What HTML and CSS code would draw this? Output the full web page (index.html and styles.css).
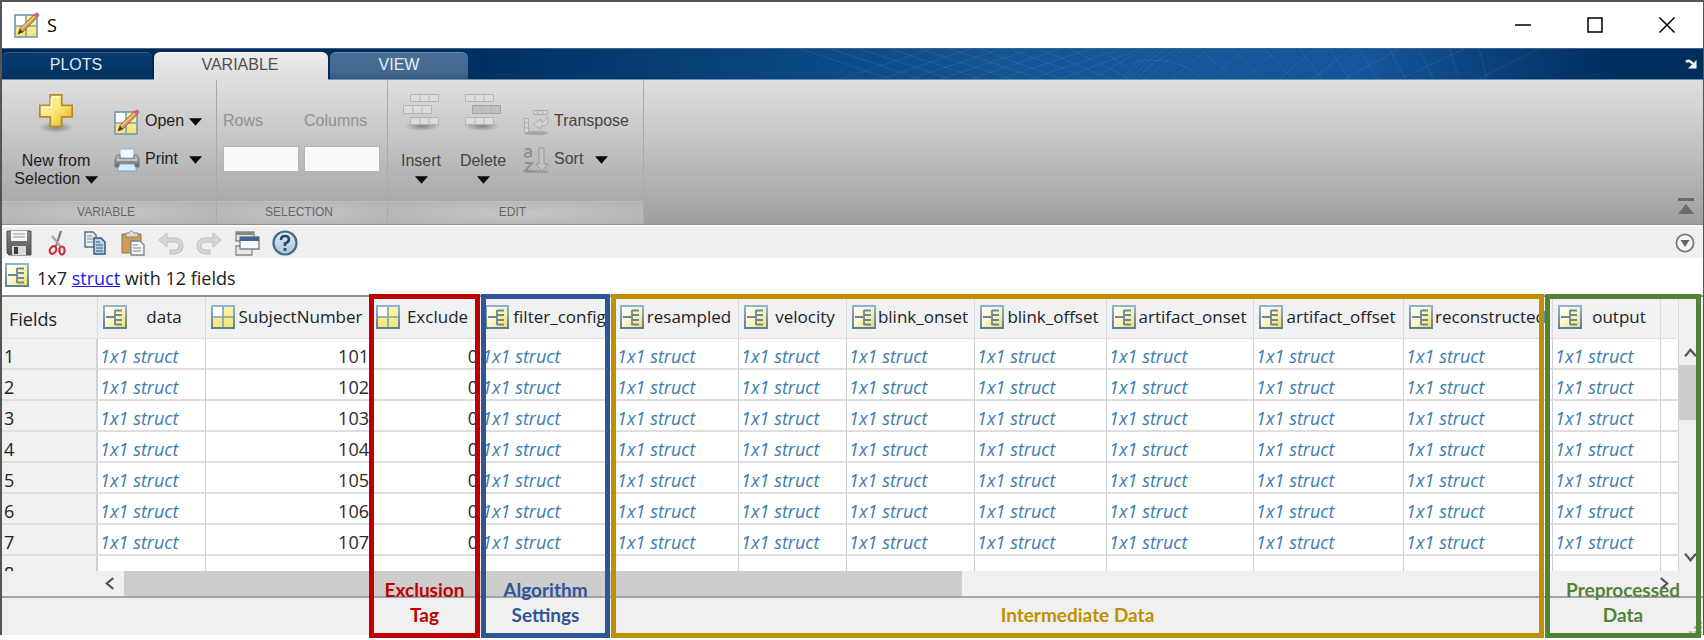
FILE: index.html
```html
<!DOCTYPE html>
<html lang="en">
<head>
<meta charset="utf-8">
<title>S</title>
<link rel="stylesheet" href="styles.css">
</head>
<body>
<svg class="defs" aria-hidden="true">
  <defs>
    <linearGradient id="gYellow" x1="0" y1="0" x2="1" y2="1"><stop offset="0" stop-color="#ffffff"/><stop offset=".45" stop-color="#fdf8cf"/><stop offset="1" stop-color="#f0dc5a"/></linearGradient>
    <linearGradient id="gCell" x1="0" y1="0" x2="0" y2="1"><stop offset="0" stop-color="#fdf7ae"/><stop offset="1" stop-color="#f4e273"/></linearGradient>
    <linearGradient id="gPlus" x1="0" y1="0" x2="1" y2="1"><stop offset="0" stop-color="#fdf3b0"/><stop offset=".5" stop-color="#fbe878"/><stop offset="1" stop-color="#e3a617"/></linearGradient>
    <linearGradient id="gFrame" x1="0" y1="0" x2="0" y2="1"><stop offset="0" stop-color="#8db4d2"/><stop offset="1" stop-color="#5f7f92"/></linearGradient>
    <linearGradient id="gGrey" x1="0" y1="0" x2="0" y2="1"><stop offset="0" stop-color="#c9c9c9"/><stop offset="1" stop-color="#5c5f61"/></linearGradient>
    <linearGradient id="gHelp" x1="0" y1="0" x2="0" y2="1"><stop offset="0" stop-color="#dfeefa"/><stop offset="1" stop-color="#a3c4de"/></linearGradient>
    <radialGradient id="gShadow"><stop offset="0" stop-color="#555" stop-opacity=".6"/><stop offset="1" stop-color="#555" stop-opacity="0"/></radialGradient>
    <symbol id="struct" viewBox="0 0 24 24">
      <rect x="1" y="1" width="22" height="22" fill="url(#gYellow)" stroke="url(#gFrame)" stroke-width="2"/>
      <path d="M3 12h9M12 5v15M12 5.500h7M12 10h7M12 15h7M12 19.500h7" fill="none" stroke="#6d8794" stroke-width="1.800"/>
    </symbol>
    <symbol id="matrix" viewBox="0 0 24 24">
      <rect x="1" y="1" width="22" height="22" fill="url(#gCell)"/>
      <rect x="2" y="2" width="10" height="10" fill="#fff"/>
      <path d="M12 1v22M1 12h22" stroke="#7f9fb4" stroke-width="1.600"/>
      <rect x="1" y="1" width="22" height="22" fill="none" stroke="url(#gFrame)" stroke-width="2"/>
    </symbol>
    <symbol id="edit" viewBox="0 0 26 26">
      <rect x="1" y="3" width="22" height="22" fill="url(#gCell)"/>
      <rect x="2" y="4" width="10" height="10" fill="#fff"/>
      <path d="M12 3v22M1 14h22" stroke="#79a3c0" stroke-width="1.600"/>
      <rect x="1" y="3" width="22" height="22" fill="none" stroke="#7298b2" stroke-width="1.600"/>
      <path d="M4 22l2-5.500L20 2.500l3 3L9 20z" fill="#d99c53" stroke="#7d5226" stroke-width=".8"/>
      <path d="M7 17L21 4" stroke="#f2c98c" stroke-width="1.300"/>
      <path d="M4 22l2-5 3 3z" fill="#4a3728"/>
      <path d="M19.500 3l2-2c2-1 4.500 1 3.500 3l-2 2z" fill="#dc5f80"/>
    </symbol>
    <symbol id="down" viewBox="0 0 14 8"><path d="M0 0h14L7 8z" fill="#0a0a0a"/></symbol>
  </defs>
</svg>

<div class="window">
  <header class="titlebar">
    <svg class="app-icon"><use href="#edit"/></svg>
    <h1>S</h1>
    <div class="window-buttons">
      <button aria-label="Minimize"><svg viewBox="0 0 18 18"><path d="M1 9h16"/></svg></button>
      <button aria-label="Maximize"><svg viewBox="0 0 18 18"><path d="M2 2h14v14H2z"/></svg></button>
      <button aria-label="Close"><svg viewBox="0 0 18 18"><path d="M1.500 1.500l15 15M16.500 1.500l-15 15"/></svg></button>
    </div>
  </header>

  <nav class="tabs">
    <svg class="banner" viewBox="0 0 904 30" preserveAspectRatio="none" aria-hidden="true">
      <g fill="none" stroke="#9cc4e8" stroke-opacity=".13">
        <path d="M0 0l90 30M30 0l90 30M60 0l90 30M90 0l90 30M120 0l90 30M150 0l90 30M180 0l80 30M210 0l80 30M240 0l70 30M270 0l60 30M300 0l30 20"/>
        <path d="M40 30L130 0M80 30L170 0M110 30L200 0M140 30L230 0M170 30L260 0M200 30L290 0M230 30L320 0M260 30L340 0M290 30L345 0"/>
        <path d="M322 30Q335 12 350 0M326 30Q340 12 358 0M331 30Q345 12 366 0M337 30Q352 12 378 0M345 30Q365 12 385 0"/>
        <path d="M330 14Q375 4 402 30M400 0l35 30M432 0l30 30M465 0l28 30M500 0l22 30M530 0l20 30M560 0l18 30M590 0l16 30M620 0l14 30M650 0l10 30M680 0l8 30"/>
        <path d="M372 30L408 0M410 30L445 0M445 30L478 0M480 30L515 0M512 30L552 0M545 30L600 0M600 30L665 0M680 30L740 0"/>
      </g>
    </svg>
    <button class="tab">PLOTS</button>
    <button class="tab active">VARIABLE</button>
    <button class="tab light">VIEW</button>
    <button class="undock" aria-label="Dock"><svg viewBox="0 0 12 10"><path d="M1 3Q4 0 8 5" fill="none" stroke="#fff" stroke-width="2.500"/><path d="M11.500 1v8.500H3z" fill="#fff"/></svg></button>
  </nav>

  <section class="toolstrip">
    <div class="group variable">
      <div class="group-body">
        <button class="big">
          <svg class="plus" viewBox="0 0 38 42"><ellipse cx="19" cy="36" rx="18" ry="6" fill="url(#gShadow)"/><path d="M13 2h12v11h11v12H25v10H13V25H2V13h11z" fill="url(#gPlus)" stroke="#b58a2a" stroke-width="1.800"/><path d="M15 4h8M4 15h10V5" fill="none" stroke="#fffbe0" stroke-width="1.500"/></svg>
          <span>New from<br>Selection <svg class="arrow"><use href="#down"/></svg></span>
        </button>
        <div class="stack">
          <button class="small"><svg class="ic"><use href="#edit"/></svg><span>Open</span><svg class="arrow"><use href="#down"/></svg></button>
          <button class="small"><svg class="ic" viewBox="0 0 26 26"><path d="M6 2h14v9H6z" fill="#f2f9fd" stroke="#92b7d0"/><path d="M3 8h3v4h14V8h3l2 4v8H1v-8z" fill="url(#gGrey)" stroke="#777"/><path d="M3 13h20" stroke="#eee"/><path d="M6 17h14l3 7H3z" fill="#d7ebf8" stroke="#7fa4bf"/></svg><span class="print">Print</span><svg class="arrow"><use href="#down"/></svg></button>
        </div>
      </div>
      <h2>VARIABLE</h2>
    </div>
    <div class="group selection">
      <div class="group-body">
        <label>Rows<input type="text"></label>
        <label>Columns<input type="text"></label>
      </div>
      <h2>SELECTION</h2>
    </div>
    <div class="group edit">
      <div class="group-body">
        <button class="op"><svg class="blocks" viewBox="0 0 38 38"><ellipse cx="20" cy="33" rx="18" ry="5" fill="url(#gShadow)"/><g fill="#dcdcdc" stroke="#b4b4b4"><path d="M8.500 1.500h28v7h-28zM1.500 12.500h28v8h-28zM8.500 24.500h28v7h-28z"/><path d="M18 2v6M27 2v6M11 13v7M20 13v7M18 25v6M27 25v6"/></g></svg><span>Insert</span><svg class="arrow"><use href="#down"/></svg></button>
        <button class="op"><svg class="blocks" viewBox="0 0 38 38"><ellipse cx="18" cy="33" rx="18" ry="5" fill="url(#gShadow)"/><g fill="#dcdcdc" stroke="#b4b4b4"><path d="M1.500 1.500h28v7h-28zM1.500 24.500h28v7h-28z"/><path d="M8.500 12.500h28v8h-28z" fill="#bfbfbf" stroke="#a2a2a2"/><path d="M11 2v6M20 2v6M18 13v7M27 13v7M11 25v6M20 25v6"/></g></svg><span>Delete</span><svg class="arrow"><use href="#down"/></svg></button>
        <div class="stack">
          <button class="small"><svg class="ic" viewBox="0 0 26 26"><ellipse cx="13" cy="24" rx="12" ry="2" fill="#777" opacity=".4"/><g fill="#d5d5d5" stroke="#adadad"><path d="M10.500 1.500h14v4h-14zM15 2v3M20 2v3M1.500 9.500h4v14h-4zM2 14h3M2 19h3"/><path d="M25 8v5q0 4-7 4v3l-8-5 8-5v3q5 0 5-5z"/></g></svg><span>Transpose</span></button>
          <button class="small"><svg class="ic" viewBox="0 0 26 26"><ellipse cx="14" cy="25" rx="12" ry="2" fill="#777" opacity=".4"/><path d="M2 3q5-3 6 1v6M8 6Q1 5 2 9q3 3 6-1M2 16h7l-7 8h7" fill="none" stroke="#929292" stroke-width="2"/><path d="M16 1h5v16h4l-6 7-6-7h3z" fill="#c4c4c4" stroke="#999"/></svg><span class="sort">Sort</span><svg class="arrow"><use href="#down"/></svg></button>
        </div>
      </div>
      <h2>EDIT</h2>
    </div>
    <button class="collapse" aria-label="Minimize toolstrip"><svg viewBox="0 0 18 18"><path d="M1 1h16v3H1zM9 7l8 10H1z" fill="#6b6b6b"/></svg></button>
  </section>

  <div class="quickbar">
    <button aria-label="Save"><svg viewBox="0 0 26 26"><path d="M1 1h24v24H3l-2-2z" fill="url(#gGrey)" stroke="#555"/><path d="M1 1h24v24H3l-2-2z" fill="#4a4d4f" opacity=".55"/><path d="M5 1h16v10H5z" fill="#f4f4f4"/><path d="M7 4h12M7 7h12" stroke="#999"/><path d="M6 16h14v9H6z" fill="#d8d8d8"/><path d="M8 17h4v7H8z" fill="#3c3c3c"/></svg></button>
    <button aria-label="Cut"><svg viewBox="0 0 26 26"><path d="M17 1l-5 15" stroke="#777" stroke-width="2.200"/><path d="M8 6l9 11" stroke="#aaa" stroke-width="2.200"/><ellipse cx="9" cy="20" rx="3" ry="4" fill="none" stroke="#cf3038" stroke-width="2.200" transform="rotate(30 9 20)"/><ellipse cx="18" cy="20.500" rx="2.600" ry="4" fill="none" stroke="#cf3038" stroke-width="2.200"/></svg></button>
    <button aria-label="Copy"><svg viewBox="0 0 26 26"><path d="M3 2h8l3 3v12H3z" fill="#e5edf3" stroke="#66747f" stroke-width="1.500"/><path d="M5 6h5M5 9h7M5 12h7" stroke="#7d8b96"/><path d="M12 8h7l4 4v12H12z" fill="#b9d3ea" stroke="#33597e" stroke-width="1.500"/><path d="M14 12h4M14 15h7M14 18h7M14 21h7" stroke="#33597e"/></svg></button>
    <button aria-label="Paste"><svg viewBox="0 0 26 26"><path d="M2 4h19v19H2z" fill="#cf9c58" stroke="#97713a"/><path d="M6 3h3q2-4 5 0h4v4H6z" fill="#ddd" stroke="#888"/><path d="M11 11h9l4 4v10H11z" fill="#f4f4f4" stroke="#7b868e" stroke-width="1.300"/><path d="M13 15h5M13 18h8M13 21h8" stroke="#808e99"/></svg></button>
    <button aria-label="Undo"><svg viewBox="0 0 26 26"><path d="M1 10l8-7v5h7q9 0 9 8 0 7-9 8h-4v-4h4q5 0 5-4t-5-4H9v5z" fill="#d6d6d6" stroke="#bdbdbd"/></svg></button>
    <button aria-label="Redo"><svg viewBox="0 0 26 26"><path d="M25 10l-8-7v5h-7q-9 0-9 8 0 7 9 8h4v-4h-4q-5 0-5-4t5-4h7v5z" fill="#d6d6d6" stroke="#bdbdbd"/></svg></button>
    <button aria-label="Switch window"><svg viewBox="0 0 26 26"><path d="M2 2h18v9H2zM2 16h16v9H2z" fill="#e8e8e8" stroke="#888" stroke-width="1.300"/><path d="M2 2h18v3H2z" fill="#888"/><path d="M6 7h19v12H6z" fill="#fafafa" stroke="#6b8299" stroke-width="1.300"/><path d="M6 7h19v4H6z" fill="#42668c"/></svg></button>
    <button aria-label="Help"><svg viewBox="0 0 26 26"><circle cx="13" cy="13" r="11.500" fill="url(#gHelp)" stroke="#4b6a81" stroke-width="2.200"/><path d="M9 10q0-4 4-4t4 3.500q0 2.500-4 4V16" fill="none" stroke="#2f4558" stroke-width="2.600"/><path d="M11.600 18h2.800v2.800h-2.800z" fill="#2f4558"/></svg></button>
    <button class="more" aria-label="More"><svg viewBox="0 0 20 20"><circle cx="10" cy="10" r="8.600" fill="#f4f4f4" stroke="#777" stroke-width="1.800"/><path d="M5.500 7h9L10 14z" fill="#666"/></svg></button>
  </div>

  <div class="summary"><svg class="ic24"><use href="#struct"/></svg><p>1x7 <a href="#sheet">struct</a> with 12 fields</p></div>

  <main class="workspace" id="sheet">
    <div class="view">
      <div class="table-clip">
        <table>
          <colgroup><col class="c-fields"><col class="c-data"><col class="c-subject"><col class="c-exclude"><col class="c-filter"><col class="c-resampled"><col class="c-velocity"><col class="c-bonset"><col class="c-boffset"><col class="c-aonset"><col class="c-aoffset"><col class="c-recon"><col class="c-output"><col></colgroup>
          <thead>
            <tr>
              <th class="corner">Fields</th>
              <th><div><svg><use href="#struct"/></svg><span>data</span></div></th>
              <th><div><svg><use href="#matrix"/></svg><span>SubjectNumber</span></div></th>
              <th><div><svg><use href="#matrix"/></svg><span>Exclude</span></div></th>
              <th><div><svg><use href="#struct"/></svg><span>filter_config</span></div></th>
              <th><div><svg><use href="#struct"/></svg><span>resampled</span></div></th>
              <th><div><svg><use href="#struct"/></svg><span>velocity</span></div></th>
              <th><div><svg><use href="#struct"/></svg><span>blink_onset</span></div></th>
              <th><div><svg><use href="#struct"/></svg><span>blink_offset</span></div></th>
              <th><div><svg><use href="#struct"/></svg><span>artifact_onset</span></div></th>
              <th><div><svg><use href="#struct"/></svg><span>artifact_offset</span></div></th>
              <th><div><svg><use href="#struct"/></svg><span>reconstructed</span></div></th>
              <th><div><svg><use href="#struct"/></svg><span>output</span></div></th>
              <th></th>
            </tr>
          </thead>
          <tbody>
            <tr><th>1</th><td>1x1 struct</td><td class="num">101</td><td class="num">0</td><td>1x1 struct</td><td>1x1 struct</td><td>1x1 struct</td><td>1x1 struct</td><td>1x1 struct</td><td>1x1 struct</td><td>1x1 struct</td><td>1x1 struct</td><td>1x1 struct</td><td></td></tr>
            <tr><th>2</th><td>1x1 struct</td><td class="num">102</td><td class="num">0</td><td>1x1 struct</td><td>1x1 struct</td><td>1x1 struct</td><td>1x1 struct</td><td>1x1 struct</td><td>1x1 struct</td><td>1x1 struct</td><td>1x1 struct</td><td>1x1 struct</td><td></td></tr>
            <tr><th>3</th><td>1x1 struct</td><td class="num">103</td><td class="num">0</td><td>1x1 struct</td><td>1x1 struct</td><td>1x1 struct</td><td>1x1 struct</td><td>1x1 struct</td><td>1x1 struct</td><td>1x1 struct</td><td>1x1 struct</td><td>1x1 struct</td><td></td></tr>
            <tr><th>4</th><td>1x1 struct</td><td class="num">104</td><td class="num">0</td><td>1x1 struct</td><td>1x1 struct</td><td>1x1 struct</td><td>1x1 struct</td><td>1x1 struct</td><td>1x1 struct</td><td>1x1 struct</td><td>1x1 struct</td><td>1x1 struct</td><td></td></tr>
            <tr><th>5</th><td>1x1 struct</td><td class="num">105</td><td class="num">0</td><td>1x1 struct</td><td>1x1 struct</td><td>1x1 struct</td><td>1x1 struct</td><td>1x1 struct</td><td>1x1 struct</td><td>1x1 struct</td><td>1x1 struct</td><td>1x1 struct</td><td></td></tr>
            <tr><th>6</th><td>1x1 struct</td><td class="num">106</td><td class="num">0</td><td>1x1 struct</td><td>1x1 struct</td><td>1x1 struct</td><td>1x1 struct</td><td>1x1 struct</td><td>1x1 struct</td><td>1x1 struct</td><td>1x1 struct</td><td>1x1 struct</td><td></td></tr>
            <tr><th>7</th><td>1x1 struct</td><td class="num">107</td><td class="num">0</td><td>1x1 struct</td><td>1x1 struct</td><td>1x1 struct</td><td>1x1 struct</td><td>1x1 struct</td><td>1x1 struct</td><td>1x1 struct</td><td>1x1 struct</td><td>1x1 struct</td><td></td></tr>
            <tr><th>8</th><td></td><td></td><td></td><td></td><td></td><td></td><td></td><td></td><td></td><td></td><td></td><td></td><td></td></tr>
          </tbody>
        </table>
      </div>
      <div class="vscroll">
        <button aria-label="Scroll up"><svg viewBox="0 0 12 10"><path d="M1 8l5-6 5 6"/></svg></button>
        <div class="vthumb"></div>
        <button class="end" aria-label="Scroll down"><svg viewBox="0 0 12 10"><path d="M1 2l5 6 5-6"/></svg></button>
      </div>
    </div>
    <div class="hscroll">
      <button aria-label="Scroll left"><svg viewBox="0 0 10 12"><path d="M8 1L2 6l6 5"/></svg></button>
      <div class="hthumb"></div>
      <button class="end" aria-label="Scroll right"><svg viewBox="0 0 10 12"><path d="M2 1l6 5-6 5"/></svg></button>
    </div>
    <footer class="status"><svg viewBox="0 0 15 15"><path d="M11 1h3v3h-3zM6 6h3v3H6zM11 6h3v3h-3zM1 11h3v3H1zM6 11h3v3H6zM11 11h3v3h-3z" fill="#bdb9b0"/></svg></footer>
    <div class="marks">
      <div class="mark red">Exclusion<br>Tag</div>
      <div class="mark blue">Algorithm<br>Settings</div>
      <div class="mark gold">Intermediate Data</div>
      <div class="mark green">Preprocessed<br>Data</div>
    </div>
  </main>
</div>
</body>
</html>
```

FILE: styles.css
```css
* { box-sizing: border-box; }
body { margin: 0; min-height: 100vh; background: #fff; font-family: "Open Sans", "Noto Sans", sans-serif; color: #222; }
button { border: 0; background: none; padding: 0; margin: 0; font: inherit; color: inherit; display: flex; align-items: center; }
svg { display: block; flex: none; }
.defs { position: absolute; width: 0; height: 0; }
.window { margin-bottom: 5px; border: solid #555; border-width: 2px 1px 0 2px; background: #f0f0f0; }

.titlebar { display: flex; align-items: center; height: 46px; padding: 0 12px; background: #fff; }
.app-icon { width: 26px; height: 26px; }
.titlebar h1 { margin: 0 0 0 7px; font-size: 18px; font-weight: 400; color: #000; }
.window-buttons { margin-left: auto; display: flex; gap: 54px; padding-right: 15px; }
.window-buttons svg { width: 18px; height: 18px; fill: none; stroke: #000; stroke-width: 1.500; }

.tabs { position: relative; display: flex; align-items: flex-end; gap: 2px; height: 32px; border-top: 1px solid #3d618a; border-bottom: 1px solid #6d8fb1; background: linear-gradient(90deg, #00264f 0, #003061 28%, #0c4984 48%, #155796 62%, #15569a 80%, #0a407a 88%, #002e5d 95%); font: 16px "Liberation Sans", Arial, sans-serif; }
.banner { position: absolute; right: 0; top: 0; width: 53%; height: 100%; }
.tab { justify-content: center; width: 150px; height: 27px; padding: 0 2px 2px 0; border-radius: 6px 6px 0 0; color: #dfe8f1; background: linear-gradient(#073b6e, #043260); border-top: 1px solid #35608c; }
.tab.active { width: 174px; height: 28px; margin-bottom: -1px; padding-bottom: 3px; color: #4f4f4f; background: linear-gradient(#ececec, #dedede); border-color: #fff; position: relative; }
.tab.light { width: 138px; padding-right: 0; color: #e8eef5; background: linear-gradient(#496f97, #456a90 70%, #34587f); border-color: #6f8fb0; }
.undock { margin: 0 6px 10px auto; position: relative; }
.undock svg { width: 12px; height: 10px; }

.toolstrip { display: flex; height: 145px; background: linear-gradient(#dfdfdf, #bfbfbf 50%, #9f9f9f); border-bottom: 1px solid #8f8f8f; font: 16px/19px "Liberation Sans", Arial, sans-serif; color: #1e1e1e; }
.group { display: flex; flex-direction: column; border-right: 1px solid #aaa; }
.group-body { flex: 1; display: flex; align-items: flex-start; }
.group h2 { margin: 0; height: 23px; padding-right: 6px; font-size: 12px; line-height: 20px; font-weight: 400; text-align: center; color: #666; background: radial-gradient(ellipse at center, #c6c6c6, #b2b2b2); border-top: 1px solid #c0c0c0; }
.variable { width: 215px; }
.selection { width: 171px; }
.edit { width: 256px; }
.arrow { width: 13px; height: 8px; display: inline-block; }
.big { flex-direction: column; gap: 19px; margin: 13px 0 0 10px; width: 88px; }
.plus { width: 38px; height: 40px; }
.big span { line-height: 18px; white-space: nowrap; }
.stack { display: flex; flex-direction: column; gap: 12px; padding: 29px 0 0 14px; }
.small { gap: 5px; height: 26px; }
.small span { min-width: 39px; text-align: left; padding-bottom: 3px; }
.ic { width: 26px; height: 26px; }
.selection .group-body { padding: 31px 0 0 6px; gap: 5px; }
.selection label { display: flex; flex-direction: column; gap: 16px; width: 76px; color: #929292; }
.selection input { width: 100%; height: 26px; border: 1px solid #b5b5b5; background: #f9f9f9; padding: 0 4px; font: inherit; }
.op { flex-direction: column; width: 62px; padding-top: 13px; color: #454545; }
.blocks { width: 38px; height: 38px; margin-bottom: 20px; }
.op .arrow { margin-top: 6px; }
.edit .group-body { padding-left: 2px; }
.edit .stack { padding-left: 9px; color: #454545; }
.edit .small .arrow { margin-left: -3px; }
.collapse { margin: auto 8px 9px auto; }
.collapse svg { width: 18px; height: 18px; }

.quickbar { display: flex; align-items: center; gap: 12px; height: 33px; padding: 0 8px 0 4px; border-top: 2px solid #fafafa; background: #efefef; }
.quickbar svg { width: 26px; height: 26px; }
.quickbar .more { margin-left: auto; }
.quickbar .more svg { width: 20px; height: 20px; }

.summary { display: flex; align-items: center; gap: 8px; height: 37px; padding-left: 3px; background: #fff; font-size: 18px; }
.summary p { margin: 2px 0 0; }
.summary a { color: #1a1aee; }
.ic24 { width: 24px; height: 24px; margin-bottom: 4px; }

.workspace { position: relative; }
.view { display: flex; height: 276px; border-top: 2px solid #8d9098; }
.table-clip { flex: 1; min-width: 0; overflow: hidden; background: #fff; }
table { width: 100%; border-collapse: separate; border-spacing: 0; table-layout: fixed; font-size: 18px; line-height: 24px; }
.c-fields { width: 96px; }
.c-data, .c-velocity, .c-output { width: 108px; }
.c-subject { width: 165px; }
.c-exclude { width: 109px; }
.c-filter { width: 135px; }
.c-resampled { width: 124px; }
.c-bonset { width: 128px; }
.c-boffset { width: 132px; }
.c-aonset { width: 147px; }
.c-aoffset { width: 150px; }
.c-recon { width: 149px; }
th, td { padding: 0; font-weight: 400; text-align: left; border-right: 1px solid #cfcfcf; border-bottom: 2px solid #dedede; white-space: nowrap; overflow: hidden; }
thead th { height: 42px; background: #f0f1f3; border-right-color: #dadbdd; border-bottom: 1px solid #e0e0e0; }
thead .corner { padding: 2px 0 0 7px; background: #f0f0f0; }
thead div { display: flex; align-items: center; padding: 0 5px 2px; font-size: 17px; }
thead svg { width: 24px; height: 24px; }
thead span { flex: 1; min-width: 0; margin-left: 1px; text-align: center; }
tbody th { background: #f0f1f3; padding-left: 2px; border-right: 2px solid #d2d2d4; }
tbody th, tbody td { height: 31px; padding-top: 4px; }
tbody td { padding-left: 2px; font-style: italic; color: #3c7db0; }
tbody .num { font-style: normal; text-align: right; color: #2b2b2b; padding-right: 1px; }
.vscroll { width: 24px; background: #f0f0f0; display: flex; flex-direction: column; align-items: center; padding: 50px 2px 8px 0; }
.vscroll svg { width: 13px; height: 12px; }
.vscroll svg, .hscroll svg { fill: none; stroke: #555; stroke-width: 2; }
.vthumb { width: 100%; height: 55px; margin-top: 6px; background: #cdcdcd; }
.end { margin: auto 0 0; }
.hscroll { display: flex; align-items: center; height: 27px; padding: 0 33px 0 102px; border-bottom: 2px solid #a0a3aa; }
.hscroll svg { width: 12px; height: 13px; }
.hthumb { width: 53.5%; height: 100%; margin-left: 8px; background: #cdcdcd; }
.hscroll .end { margin: 0 0 0 auto; }
.status { display: flex; justify-content: flex-end; align-items: flex-end; height: 37px; }
.status svg { width: 15px; height: 15px; }

.marks { position: absolute; inset: -1px 2px -3px 0; display: grid; grid-template-columns: 111px 129px 933px 1fr; column-gap: 1px; padding-left: 367px; pointer-events: none; }
.mark { display: flex; align-items: flex-end; justify-content: center; border: 5px solid; padding-bottom: 6px; text-align: center; font: 700 19px/25px Lato, "Open Sans", sans-serif; }
.red { color: #c00000; }
.blue { color: #2f5597; }
.gold { color: #bf9000; }
.green { color: #548235; }
```
